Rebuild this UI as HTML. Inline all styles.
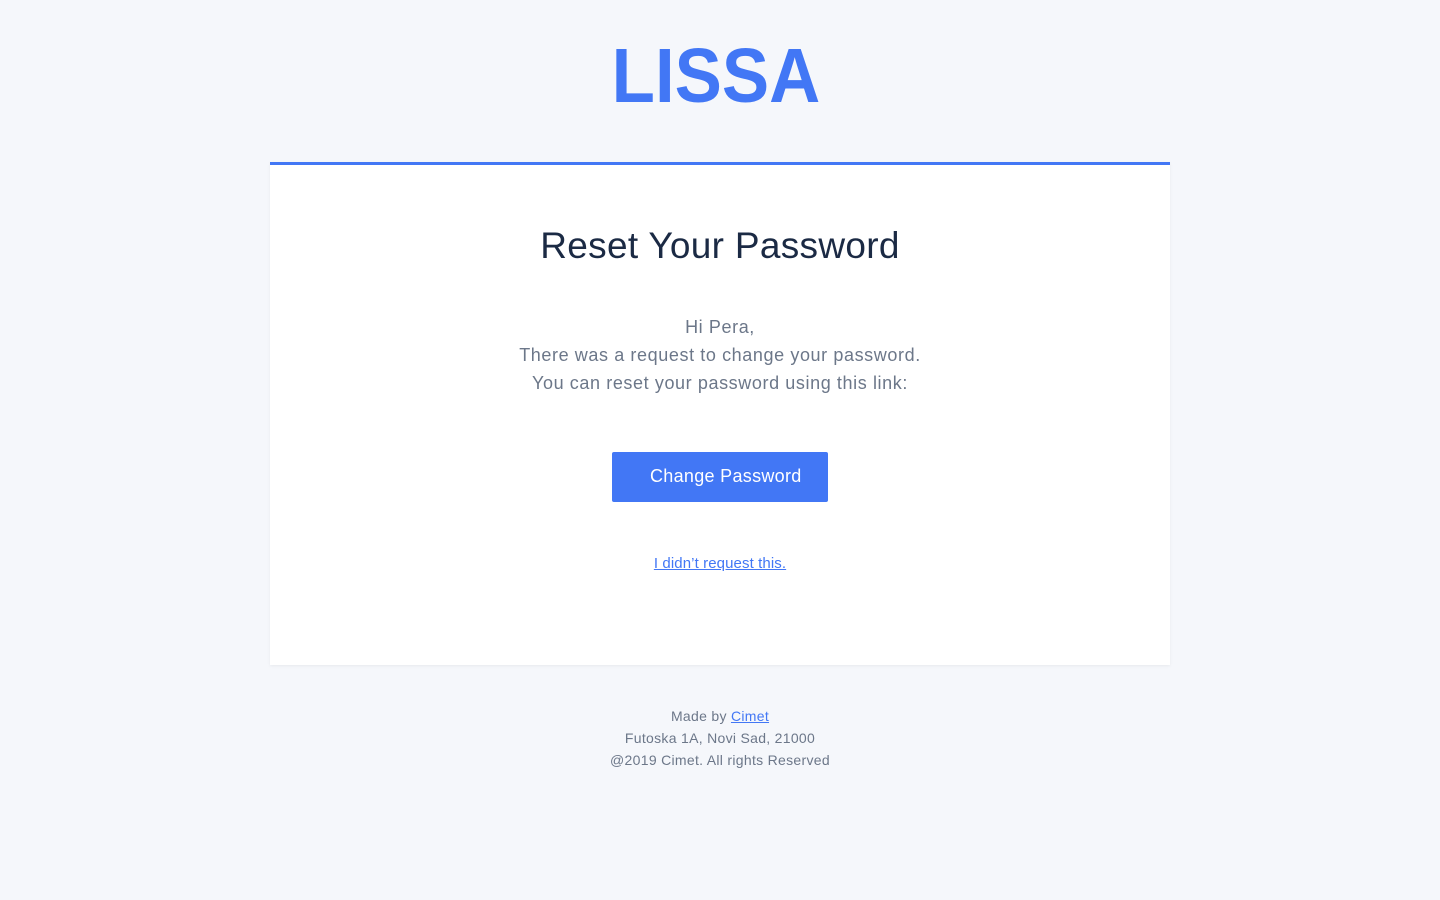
<!DOCTYPE html>
<html><head><style>
body{margin:0;background:#f5f7fb;font-family:"Liberation Sans",sans-serif;width:1440px;height:900px;position:relative;overflow:hidden}
.logo{position:absolute;top:31px;left:-4px;width:1440px;text-align:center;font-weight:bold;font-size:77px;color:#4277f5;line-height:90px;transform:scaleX(0.92)}
.card{position:absolute;left:270px;top:162px;width:900px;height:500px;background:#fff;border-top:3px solid #4277f5;box-shadow:0 1px 3px rgba(0,0,0,.06)}
h1{position:absolute;top:223px;left:0;width:1440px;text-align:center;margin:0;font-weight:normal;font-size:37px;color:#1b2a44;line-height:46px;letter-spacing:.3px}
.body{position:absolute;top:313px;left:0;width:1440px;text-align:center;font-size:18px;line-height:28px;color:#6c7789;letter-spacing:.6px}
.btn{position:absolute;left:612px;top:452px;width:216px;height:50px;background:#4277f5;border-radius:2px;color:#fff;font-size:18px;line-height:48px;box-sizing:border-box;padding-left:38px;letter-spacing:.3px}
.link{position:absolute;top:554px;left:0;width:1440px;text-align:center;font-size:15px;color:#4277f5;line-height:20px;letter-spacing:.1px}
.link span{text-decoration:underline}
.foot{position:absolute;top:705px;left:0;width:1440px;text-align:center;font-size:14px;line-height:22px;color:#6c7789;letter-spacing:.3px}
.foot a{color:#4277f5;text-decoration:underline}
</style></head><body>
<div class="logo">LISSA</div>
<div class="card"></div>
<h1>Reset Your Password</h1>
<div class="body">Hi Pera,<br>There was a request to change your password.<br>You can reset your password using this link:</div>
<div class="btn">Change Password</div>
<div class="link"><span>I didn’t request this.</span></div>
<div class="foot">Made by <a>Cimet</a><br>Futoska 1A, Novi Sad, 21000<br>@2019 Cimet. All rights Reserved</div>
</body></html>
